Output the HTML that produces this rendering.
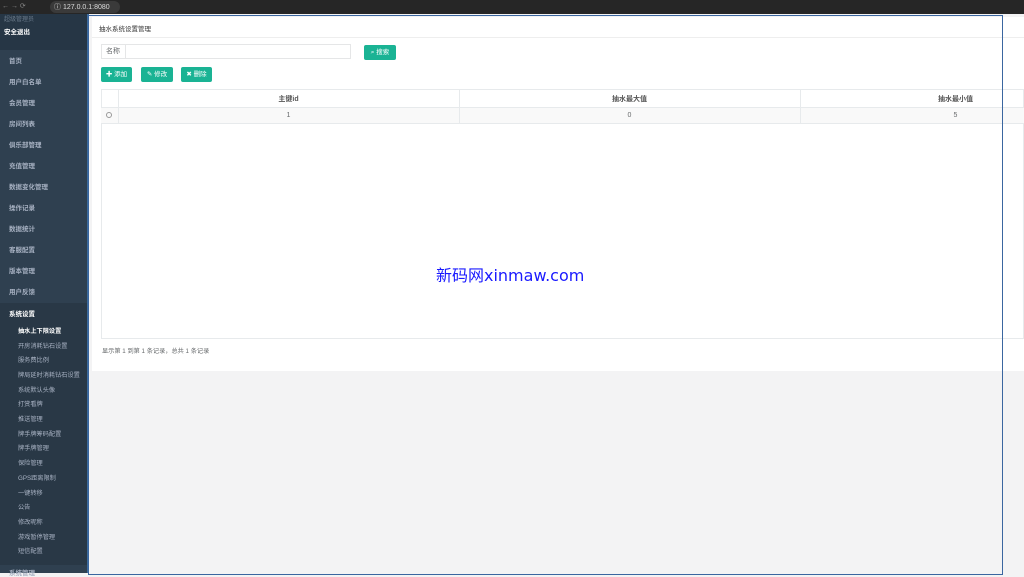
<!DOCTYPE html>
<html><head><meta charset="utf-8"><style>
*{margin:0;padding:0;box-sizing:border-box}
body{width:1024px;height:573px;overflow:hidden;background:#f3f3f4;font-family:"Liberation Sans","Noto Sans CJK SC",sans-serif;font-size:7px;color:#676a6c;position:relative}
.bar{position:absolute;left:0;top:0;width:1024px;height:14px;background:#262626;color:#ccc;font-size:7px}
.side{position:absolute;left:0;top:14px;width:87px;height:559px;background:#2f4050}
.hdr{position:absolute;left:0;top:0;width:87px;height:36px;background:#263645}
.side div.i{position:absolute;left:9px;color:#a7b1c2;font-size:6.5px;font-weight:bold}
.sub{position:absolute;left:0;top:289px;width:87px;height:262px;background:#293846}
.side div.s{position:absolute;left:18px;color:#a7b1c2;font-size:6.2px}
.vline{position:absolute;left:87px;top:14px;width:1.5px;height:559px;background:#3c6a9a}
.panel{position:absolute;left:92px;top:17px;width:932px;height:354px;background:#fff}
.frame{position:absolute;left:88px;top:15px;width:915px;height:560px;border:1.5px solid #3a66a0;pointer-events:none}
.btn{position:absolute;background:#1ab394;color:#fff;font-size:6.5px;border-radius:2px;text-align:center;line-height:15px;height:15px}
.ab{position:absolute}
</style></head><body>
<div class="bar"><span class="ab" style="left:2px;top:2px;color:#888">← → ⟳</span><span class="ab" style="left:50px;top:1px;width:70px;height:12px;background:#3a3a3a;border-radius:6px"></span><span class="ab" style="left:54px;top:2px;color:#ddd">ⓘ 127.0.0.1:8080</span></div>
<div class="side">
<div class="hdr"><div class="ab" style="left:4px;top:0px;color:#6a7a8a;font-size:6px">超级管理员</div><div class="ab" style="left:4px;top:12px;color:#fff;font-size:6.5px;font-weight:bold">安全退出</div></div>
<div class="i" style="top:41px">首页</div>
<div class="i" style="top:62px">用户白名单</div>
<div class="i" style="top:83px">会员管理</div>
<div class="i" style="top:104px">房间列表</div>
<div class="i" style="top:125px">俱乐部管理</div>
<div class="i" style="top:146px">充值管理</div>
<div class="i" style="top:167px">数据变化管理</div>
<div class="i" style="top:188px">操作记录</div>
<div class="i" style="top:209px">数据统计</div>
<div class="i" style="top:230px">客服配置</div>
<div class="i" style="top:251px">版本管理</div>
<div class="i" style="top:272px">用户反馈</div>
<div class="sub"></div>
<div class="i" style="top:294px;color:#fff">系统设置</div>
<div class="s" style="top:312px;color:#fff;font-weight:bold">抽水上下限设置</div>
<div class="s" style="top:327px">开房消耗钻石设置</div>
<div class="s" style="top:341px">服务费比例</div>
<div class="s" style="top:356px">牌局延时消耗钻石设置</div>
<div class="s" style="top:371px">系统默认头像</div>
<div class="s" style="top:385px">打赏看牌</div>
<div class="s" style="top:400px">推送管理</div>
<div class="s" style="top:415px">牌手牌筹码配置</div>
<div class="s" style="top:429px">牌手牌管理</div>
<div class="s" style="top:444px">保险管理</div>
<div class="s" style="top:459px">GPS距离限制</div>
<div class="s" style="top:474px">一键转移</div>
<div class="s" style="top:488px">公告</div>
<div class="s" style="top:503px">修改昵称</div>
<div class="s" style="top:518px">游戏暂停管理</div>
<div class="s" style="top:532px">短信配置</div>
<div class="i" style="top:553px">系统管理</div>
</div>
<div class="vline"></div>
<div class="panel">
<div class="ab" style="left:7px;top:6px;font-size:6.5px;color:#333">抽水系统设置管理</div>
<div class="ab" style="left:0;top:20px;width:932px;height:1px;background:#eee"></div>
<div class="ab" style="left:9px;top:27px;width:250px;height:15px;border:1px solid #e5e6e7"></div>
<div class="ab" style="left:9px;top:27px;width:25px;height:15px;border-right:1px solid #e5e6e7;line-height:15px;text-align:center">名称</div>
</div>
<div class="btn" style="left:364px;top:45px;width:32px">⌕ 搜索</div>
<div class="btn" style="left:101px;top:67px;width:31px">✚ 添加</div>
<div class="btn" style="left:141px;top:67px;width:32px">✎ 修改</div>
<div class="btn" style="left:181px;top:67px;width:31px">✖ 删除</div>
<div class="ab" style="left:101px;top:89px;width:923px;height:250px;border:1px solid #e7eaec;background:#fff"></div>
<div class="ab" style="left:101px;top:107px;width:923px;height:17px;background:#f9f9f9;border-top:1px solid #e7eaec;border-bottom:1px solid #e7eaec"></div>
<div class="ab" style="left:118px;top:89px;width:1px;height:35px;background:#e7eaec"></div>
<div class="ab" style="left:459px;top:89px;width:1px;height:35px;background:#e7eaec"></div>
<div class="ab" style="left:800px;top:89px;width:1px;height:35px;background:#e7eaec"></div>
<div class="ab" style="left:118px;top:94px;width:341px;text-align:center;font-weight:bold;color:#555">主键id</div>
<div class="ab" style="left:459px;top:94px;width:341px;text-align:center;font-weight:bold;color:#555">抽水最大值</div>
<div class="ab" style="left:800px;top:94px;width:311px;text-align:center;font-weight:bold;color:#555">抽水最小值</div>
<div class="ab" style="left:106px;top:112px;width:6px;height:6px;border:1px solid #999;border-radius:50%"></div>
<div class="ab" style="left:118px;top:112px;width:341px;text-align:center">1</div>
<div class="ab" style="left:459px;top:112px;width:341px;text-align:center">0</div>
<div class="ab" style="left:800px;top:112px;width:311px;text-align:center">5</div>
<div class="ab" style="left:102px;top:346px;font-size:6.2px">显示第 1 到第 1 条记录，总共 1 条记录</div>
<div class="ab" style="left:436px;top:262px;font-size:16px;color:#1a1aff;font-family:'DejaVu Sans','Noto Sans CJK SC',sans-serif">新码网xinmaw.com</div>
<div class="frame"></div>
</body></html>
